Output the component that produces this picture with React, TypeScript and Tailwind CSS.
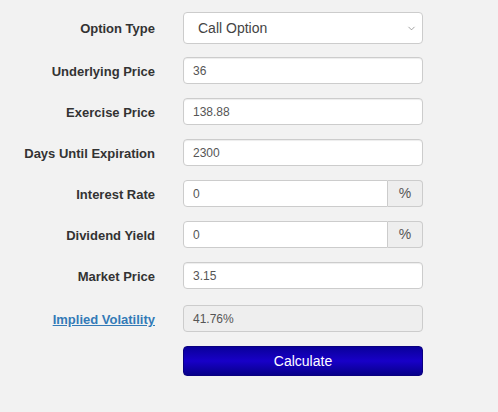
import { ChevronDown } from "lucide-react";

const labelClass =
  "w-[155px] shrink-0 pt-[2px] text-right text-[13px] font-bold text-[#333]";

const inputClass =
  "h-[27px] w-full rounded border border-[#ccc] bg-white px-[9px] text-[12px] text-[#555] shadow-[inset_0_1px_1px_rgba(0,0,0,0.075)] outline-none";

interface FieldRowProps {
  label: string;
  value: string;
  suffix?: string;
  className?: string;
}

const FieldRow = ({ label, value, suffix, className = "" }: FieldRowProps) => {
  return (
    <div className={`flex items-center gap-[28px] ${className}`}>
      <label className={labelClass}>{label}</label>

      <div className="w-[240px]">
        {suffix ? (
          <div className="flex h-[27px]">
            <input
              readOnly
              value={value}
              className="h-[27px] w-full rounded-l border border-[#ccc] bg-white px-[9px] text-[12px] text-[#555] outline-none"
            />
            <span className="flex w-[35px] shrink-0 items-center justify-center rounded-r border border-l-0 border-[#ccc] bg-[#eee] text-[14px] text-[#555]">
              {suffix}
            </span>
          </div>
        ) : (
          <input readOnly value={value} className={inputClass} />
        )}
      </div>
    </div>
  );
};

const App = () => {
  return (
    <div
      className="min-h-[412px] w-full bg-[#f2f2f2] pt-[12px]"
      style={{ fontFamily: '"Liberation Sans", Arial, sans-serif' }}
    >
      <div className="flex items-center gap-[28px]">
        <label className={labelClass}>Option Type</label>

        <div className="relative flex h-[32px] w-[240px] items-center rounded border border-[#ccc] bg-white pl-[14px] text-[14px] text-[#444]">
          Call Option
          <ChevronDown
            className="absolute right-[5px] top-[10px] h-[11px] w-[11px] text-[#777]"
            strokeWidth={1.5}
          />
        </div>
      </div>

      <FieldRow label="Underlying Price" value="36" className="mt-[13px]" />
      <FieldRow label="Exercise Price" value="138.88" className="mt-[14px]" />
      <FieldRow
        label="Days Until Expiration"
        value="2300"
        className="mt-[14px]"
      />
      <FieldRow
        label="Interest Rate"
        value="0"
        suffix="%"
        className="mt-[14px]"
      />
      <FieldRow
        label="Dividend Yield"
        value="0"
        suffix="%"
        className="mt-[14px]"
      />
      <FieldRow label="Market Price" value="3.15" className="mt-[14px]" />

      <div className="mt-[16px] flex items-center gap-[28px]">
        <a
          href="#"
          className="w-[155px] shrink-0 pt-[3px] text-right text-[13px] font-bold text-[#337ab7] underline"
        >
          Implied Volatility
        </a>

        <div className="flex h-[27px] w-[240px] items-center rounded border border-[#ccc] bg-[#eee] px-[9px] text-[12px] text-[#555]">
          41.76%
        </div>
      </div>

      <div className="mt-[14px] flex gap-[28px]">
        <div className="w-[155px] shrink-0" />

        <button
          type="button"
          className="h-[30px] w-[240px] rounded border border-[#0a0080] bg-gradient-to-b from-[#0a009a] via-[#1800c8] to-[#07008a] text-[14px] text-white"
        >
          Calculate
        </button>
      </div>
    </div>
  );
};

export default App;
